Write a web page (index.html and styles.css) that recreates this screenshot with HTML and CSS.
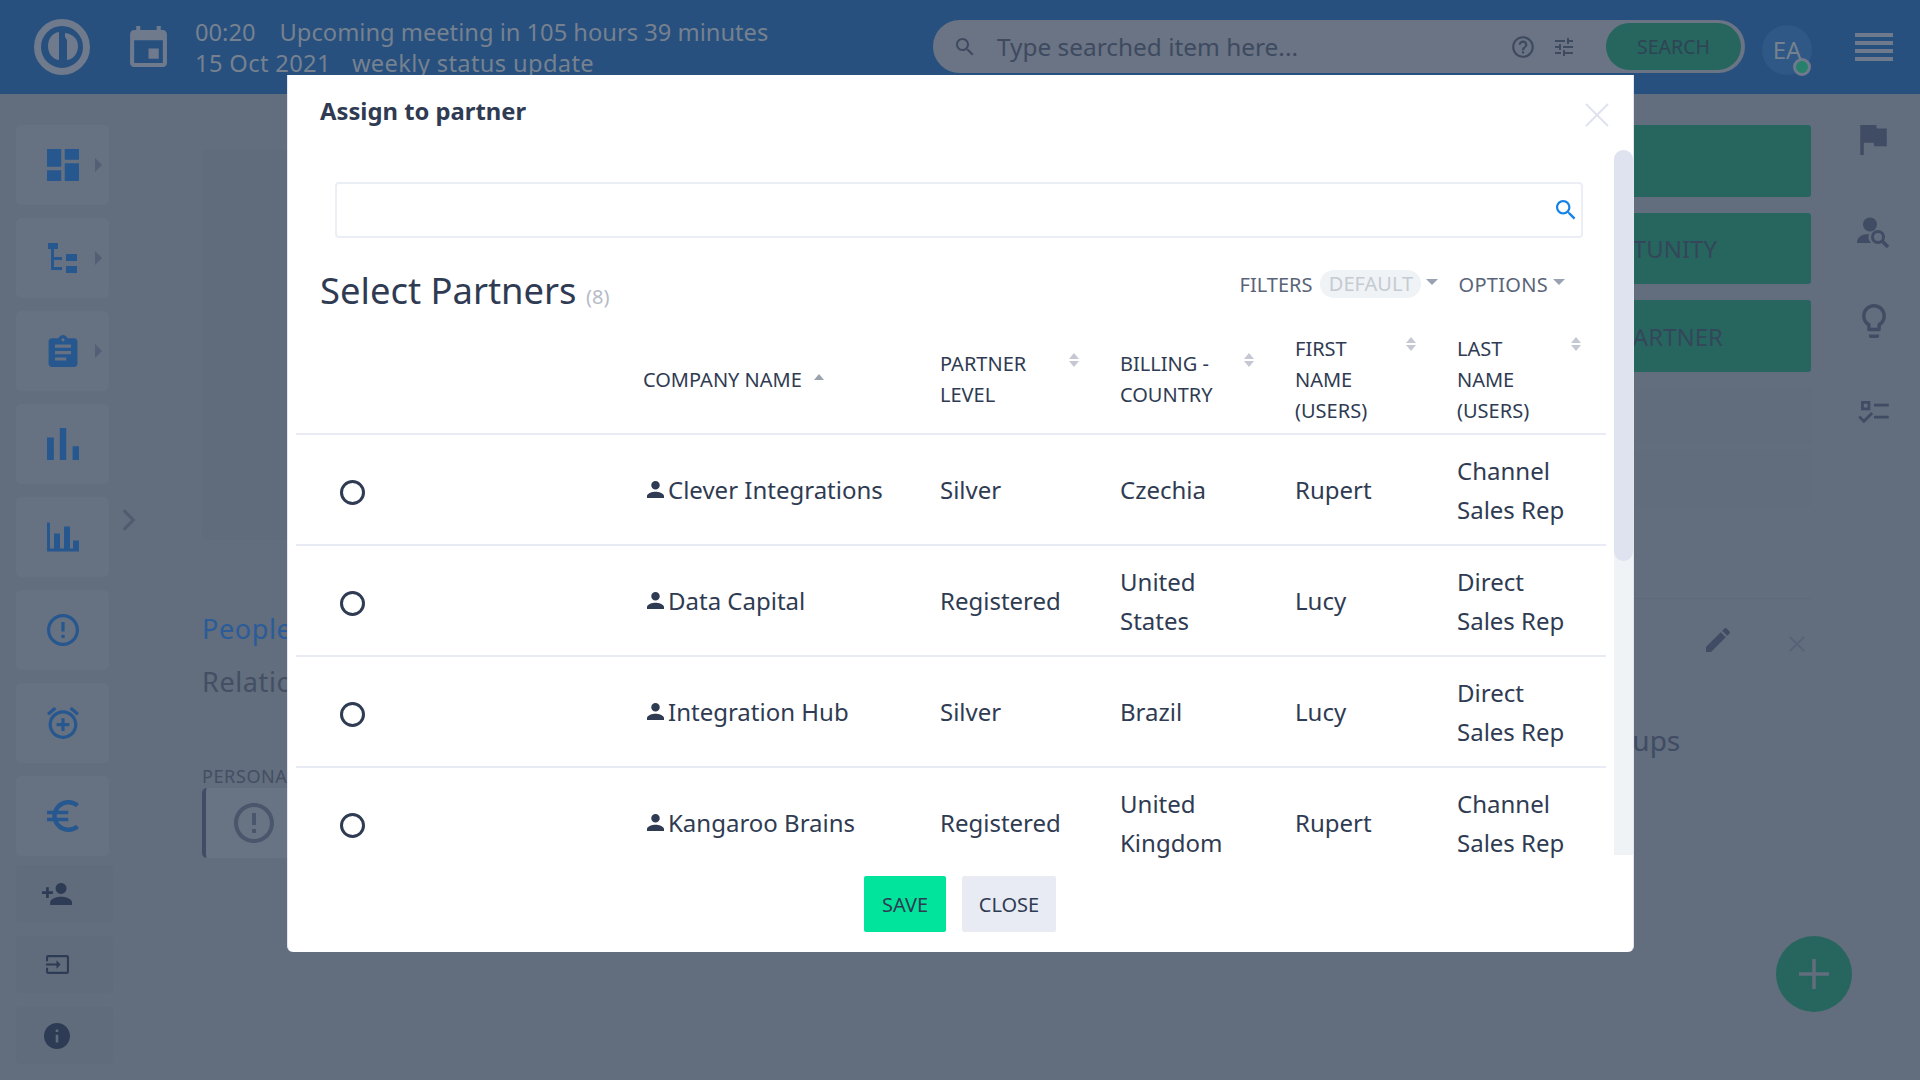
FILE: index.html
```html
<!DOCTYPE html>
<html lang="en">
<head>
<meta charset="utf-8">
<title>Assign to partner</title>
<link rel="stylesheet" href="styles.css">
</head>
<body>
<header class="topbar">
  <svg class="logo" viewBox="0 0 56 56"><circle cx="28" cy="28" r="24.5" fill="none" stroke="#6f7a8c" stroke-width="7"/><path d="M25 13v28c-7-1-11-7-11-14s4-13 11-14z" fill="#6f7a8c"/><path d="M31 14v4l2 3v20c7-1 11-7 11-14s-5-12-13-13z" fill="#6f7a8c"/></svg>
  <svg class="cal" viewBox="3 1 18 20"><path fill="#6f7a8c" d="M17 12h-5v5h5v-5zM16 1v2H8V1H6v2H5c-1.11 0-1.99.9-1.99 2L3 19c0 1.1.89 2 2 2h14c1.1 0 2-.9 2-2V5c0-1.1-.9-2-2-2h-1V1h-2zm3 18H5V8h14v11z"/></svg>
  <div class="meeting">
    <div><span>00:20</span><span class="gap-a">Upcoming meeting in 105 hours 39 minutes</span></div>
    <div class="meeting-sub"><span>15 Oct 2021</span><span class="gap-b">weekly status update</span></div>
  </div>
  <div class="searchbar">
    <svg class="i-search" viewBox="0 0 24 24"><path fill="#3e4a60" d="M15.5 14h-.79l-.28-.27C15.41 12.59 16 11.11 16 9.5 16 5.91 13.09 3 9.5 3S3 5.91 3 9.5 5.91 16 9.5 16c1.61 0 3.09-.59 4.23-1.57l.27.28v.79l5 4.99L20.49 19l-4.99-5zm-6 0C7.01 14 5 11.99 5 9.5S7.01 5 9.5 5 14 7.01 14 9.5 11.99 14 9.5 14z"/></svg>
    <span class="placeholder">Type searched item here...</span>
    <svg class="i-help" viewBox="0 0 24 24"><path fill="#3e4a60" d="M11 18h2v-2h-2v2zm1-16C6.48 2 2 6.48 2 12s4.48 10 10 10 10-4.48 10-10S17.52 2 12 2zm0 18c-4.41 0-8-3.59-8-8s3.59-8 8-8 8 3.59 8 8-3.59 8-8 8zm0-14c-2.21 0-4 1.79-4 4h2c0-1.1.9-2 2-2s2 .9 2 2c0 2-3 1.75-3 5h2c0-2.25 3-2.5 3-5 0-2.21-1.79-4-4-4z"/></svg>
    <svg class="i-tune" viewBox="0 0 24 24"><path fill="#3e4a60" d="M3 17v2h6v-2H3zM3 5v2h10V5H3zm10 16v-2h8v-2h-8v-2h-2v6h2zM7 9v2H3v2h4v2h2V9H7zm14 4v-2H11v2h10zm-6-4h2V7h4V5h-4V3h-2v6z"/></svg>
    <span class="search-btn">SEARCH</span>
  </div>
  <div class="avatar">EA<span class="status"></span></div>
  <div class="burger"><i></i><i></i><i></i><i></i></div>
</header>

<div class="app">
  <nav class="side">
    <div class="tile"><svg viewBox="3 3 18 18"><path d="M3 13h8V3H3v10zm0 8h8v-6H3v6zm10 0h8V11h-8v10zm0-18v6h8V3h-8z"/></svg><b class="tri"></b></div>
    <div class="tile"><svg viewBox="0 0 32 32"><path d="M1 1h10v6H1zM4 7h3v8h8v3H7v7h8v3H4zM19 12h11v7H19zM19 24h11v7H19z"/></svg><b class="tri"></b></div>
    <div class="tile"><svg viewBox="3 1 18 20"><path d="M19 3h-4.18C14.4 1.84 13.3 1 12 1c-1.3 0-2.4.84-2.82 2H5c-1.1 0-2 .9-2 2v14c0 1.1.9 2 2 2h14c1.1 0 2-.9 2-2V5c0-1.1-.9-2-2-2zm-7 0c.55 0 1 .45 1 1s-.45 1-1 1-1-.45-1-1 .45-1 1-1zm2 14H7v-2h7v2zm3-4H7v-2h10v2zm0-4H7V7h10v2z"/></svg><b class="tri"></b></div>
    <div class="tile"><svg viewBox="5 5 14 14"><path d="M5 9.2h3V19H5zM10.6 5h2.8v14h-2.8zm5.6 8H19v6h-2.8z"/></svg></div>
    <div class="tile"><svg viewBox="0 0 32 29"><path d="M0 0h3v26h4V11h6v15h4V4h6v22h3V18h6v11H0z"/></svg></div>
    <div class="tile"><svg viewBox="2 2 20 20"><path d="M11 15h2v2h-2zm0-8h2v6h-2zm.99-5C6.47 2 2 6.48 2 12s4.47 10 9.99 10C17.52 22 22 17.52 22 12S17.52 2 11.99 2zM12 20c-4.42 0-8-3.58-8-8s3.58-8 8-8 8 3.58 8 8-3.58 8-8 8z"/></svg></div>
    <div class="tile"><svg viewBox="2 2 20 20"><path d="M7.88 3.39L6.6 1.86 2 5.71l1.29 1.53 4.59-3.85zM22 5.72l-4.6-3.86-1.29 1.53 4.6 3.86L22 5.72zM12 4c-4.97 0-9 4.03-9 9s4.02 9 9 9c4.97 0 9-4.03 9-9s-4.03-9-9-9zm0 16c-3.87 0-7-3.13-7-7s3.13-7 7-7 7 3.13 7 7-3.13 7-7 7zm1-11h-2v3H8v2h3v3h2v-3h3v-2h-3V9z"/></svg></div>
    <div class="tile"><svg viewBox="3 3 18 18"><path d="M15 18.5c-2.51 0-4.68-1.42-5.76-3.5H15v-2H8.58c-.05-.33-.08-.66-.08-1s.03-.67.08-1H15V9H9.24C10.32 6.92 12.5 5.5 15 5.5c1.61 0 3.09.59 4.23 1.57L21 5.3C19.41 3.87 17.3 3 15 3c-3.92 0-7.24 2.51-8.48 6H3v2h3.06c-.04.33-.06.66-.06 1s.02.67.06 1H3v2h3.52c1.24 3.49 4.56 6 8.48 6 2.31 0 4.41-.87 6-2.3l-1.77-1.77c-1.14.98-2.61 1.57-4.23 1.57z"/></svg></div>
    <div class="tile small first-small"><svg viewBox="1 4 22 16"><path d="M15 12c2.21 0 4-1.79 4-4s-1.79-4-4-4-4 1.79-4 4 1.79 4 4 4zm-9-2V7H4v3H1v2h3v3h2v-3h3v-2H6zm9 4c-2.67 0-8 1.34-8 4v2h16v-2c0-2.66-5.33-4-8-4z"/></svg></div>
    <div class="tile small"><svg class="login" viewBox="1 3 22 18"><path d="M21 3.01H3c-1.1 0-2 .9-2 2V9h2V4.99h18v14.03H3V15H1v4.01c0 1.1.9 1.98 2 1.98h18c1.1 0 2-.88 2-1.98v-14c0-1.11-.9-2-2-2zM11 16l4-4-4-4v3H1v2h10v3z"/></svg></div>
    <div class="tile small"><svg class="about" viewBox="2 2 20 20"><path d="M12 2C6.48 2 2 6.48 2 12s4.48 10 10 10 10-4.48 10-10S17.52 2 12 2zm1 15h-2v-6h2v6zm0-8h-2V7h2v2z"/></svg></div>
  </nav>
  <div class="collapse"><svg viewBox="0 0 16 26"><path d="M2 2l11 11L2 24" fill="none" stroke="#505c72" stroke-width="3.5"/></svg></div>
  <main class="content">
    <div class="ghost-panel"></div>
    <div class="tab-blue">People</div>
    <div class="tab-grey">Relationships</div>
    <div class="caption">PERSONAL</div>
    <div class="notice"><svg viewBox="2 2 20 20"><path fill="#4a566c" d="M11 15h2v2h-2zm0-8h2v6h-2zm.99-5C6.47 2 2 6.48 2 12s4.47 10 9.99 10C17.52 22 22 17.52 22 12S17.52 2 11.99 2zM12 20c-4.42 0-8-3.58-8-8s3.58-8 8-8 8 3.58 8 8-3.58 8-8 8z"/></svg></div>
  </main>
  <aside class="actions">
    <div class="action"></div>
    <div class="action action-mid">OPPORTUNITY</div>
    <div class="action action-last">ASSIGN TO PARTNER</div>
    <div class="ghost-row"></div>
    <div class="ghost-row"></div>
    <div class="rule"></div>
    <div class="tools">
      <svg class="pencil" viewBox="3 3 18 18"><path fill="#3f4c63" d="M3 17.25V21h3.75L17.81 9.94l-3.75-3.75L3 17.25zM20.71 7.04c.39-.39.39-1.02 0-1.41l-2.34-2.34c-.39-.39-1.02-.39-1.41 0l-1.83 1.83 3.75 3.75 1.83-1.83z"/></svg>
      <svg class="cross" viewBox="0 0 20 20"><path d="M2 2l16 16M18 2L2 18" stroke="#566278" stroke-width="2" fill="none"/></svg>
    </div>
    <div class="groups">Groups</div>
  </aside>
  <aside class="rail">
    <svg class="flag" viewBox="5 4 15 17"><path d="M14.4 6L14 4H5v17h2v-7h5.6l.4 2h7V6z"/></svg>
    <svg class="finder" viewBox="0 0 34 32"><circle cx="13" cy="7.5" r="7"/><path d="M0 26c0-6 5-9 12-9-1 3-1 6 2 9z"/><circle cx="21" cy="20" r="5.5" fill="none" stroke="#3f4c63" stroke-width="3"/><path d="M25 24l6 6" stroke="#3f4c63" stroke-width="3.5" fill="none"/></svg>
    <svg class="bulb" viewBox="5 2 14 20"><path d="M9 21c0 .55.45 1 1 1h4c.55 0 1-.45 1-1v-1H9v1zm3-19C8.14 2 5 5.14 5 9c0 2.38 1.19 4.47 3 5.74V17c0 .55.45 1 1 1h6c.55 0 1-.45 1-1v-2.26c1.81-1.27 3-3.36 3-5.74 0-3.86-3.14-7-7-7zm2.85 11.1l-.85.6V16h-4v-2.3l-.85-.6C7.8 12.16 7 10.63 7 9c0-2.76 2.24-5 5-5s5 2.24 5 5c0 1.63-.8 3.16-2.15 4.1z"/></svg>
    <svg class="tasks" viewBox="0 0 34 26"><path d="M3 1h10v10H3zM6 4v4h4V4zM17 4h16v3H17zM17 17h16v3H17z"/><path d="M1 18l5 5 9-9" fill="none" stroke="#3f4c63" stroke-width="3"/></svg>
  </aside>
</div>

<div class="fab"><svg viewBox="0 0 30 30"><path d="M15 0v30M0 15h30" stroke="#626d7d" stroke-width="3.5"/></svg></div>

<section class="modal">
  <div class="modal-head">
    <h2>Assign to partner</h2>
    <svg class="modal-x" viewBox="0 0 24 24"><path d="M1 1l22 22M23 1L1 23" stroke="#e0e3ef" stroke-width="2" fill="none"/></svg>
  </div>
  <div class="modal-body">
    <div class="scroller">
      <div class="finder-input"><svg viewBox="3 3 18 18"><path fill="#1583e6" d="M15.5 14h-.79l-.28-.27C15.41 12.59 16 11.11 16 9.5 16 5.91 13.09 3 9.5 3S3 5.91 3 9.5 5.91 16 9.5 16c1.61 0 3.09-.59 4.23-1.57l.27.28v.79l5 4.99L20.49 19l-4.99-5zm-6 0C7.01 14 5 11.99 5 9.5S7.01 5 9.5 5 14 7.01 14 9.5 11.99 14 9.5 14z"/></svg></div>
      <div class="list-title">
        <h1>Select Partners <small>(8)</small></h1>
        <div class="list-tools">
          <span class="t-label">FILTERS</span>
          <span class="pill">DEFAULT</span>
          <b class="caret"></b>
          <span class="t-label opt">OPTIONS</span>
          <b class="caret"></b>
        </div>
      </div>
      <table class="grid">
        <colgroup><col class="c0"><col class="c1"><col class="c2"><col class="c3"><col class="c4"><col class="c5"></colgroup>
        <thead>
          <tr>
            <th></th>
            <th>COMPANY NAME<span class="sort sort-co"><b class="up dark"></b></span></th>
            <th class="two">PARTNER<br>LEVEL<span class="sort sort-pl"><b class="up"></b><b class="dn"></b></span></th>
            <th class="two">BILLING -<br>COUNTRY<span class="sort sort-bc"><b class="up"></b><b class="dn"></b></span></th>
            <th>FIRST<br>NAME<br>(USERS)<span class="sort sort-fn"><b class="up"></b><b class="dn"></b></span></th>
            <th>LAST<br>NAME<br>(USERS)<span class="sort sort-ln"><b class="up"></b><b class="dn"></b></span></th>
          </tr>
        </thead>
        <tbody>
          <tr>
            <td><span class="radio"></span></td>
            <td><span class="co"><svg viewBox="4 4 16 16"><path d="M12 12c2.21 0 4-1.79 4-4s-1.79-4-4-4-4 1.79-4 4 1.79 4 4 4zm0 2c-2.67 0-8 1.34-8 4v2h16v-2c0-2.66-5.33-4-8-4z"/></svg>Clever Integrations</span></td>
            <td>Silver</td><td>Czechia</td><td>Rupert</td><td>Channel<br>Sales Rep</td>
          </tr>
          <tr>
            <td><span class="radio"></span></td>
            <td><span class="co"><svg viewBox="4 4 16 16"><path d="M12 12c2.21 0 4-1.79 4-4s-1.79-4-4-4-4 1.79-4 4 1.79 4 4 4zm0 2c-2.67 0-8 1.34-8 4v2h16v-2c0-2.66-5.33-4-8-4z"/></svg>Data Capital</span></td>
            <td>Registered</td><td>United<br>States</td><td>Lucy</td><td>Direct<br>Sales Rep</td>
          </tr>
          <tr>
            <td><span class="radio"></span></td>
            <td><span class="co"><svg viewBox="4 4 16 16"><path d="M12 12c2.21 0 4-1.79 4-4s-1.79-4-4-4-4 1.79-4 4 1.79 4 4 4zm0 2c-2.67 0-8 1.34-8 4v2h16v-2c0-2.66-5.33-4-8-4z"/></svg>Integration Hub</span></td>
            <td>Silver</td><td>Brazil</td><td>Lucy</td><td>Direct<br>Sales Rep</td>
          </tr>
          <tr>
            <td><span class="radio"></span></td>
            <td><span class="co"><svg viewBox="4 4 16 16"><path d="M12 12c2.21 0 4-1.79 4-4s-1.79-4-4-4-4 1.79-4 4 1.79 4 4 4zm0 2c-2.67 0-8 1.34-8 4v2h16v-2c0-2.66-5.33-4-8-4z"/></svg>Kangaroo Brains</span></td>
            <td>Registered</td><td>United<br>Kingdom</td><td>Rupert</td><td>Channel<br>Sales Rep</td>
          </tr>
        </tbody>
      </table>
    </div>
    <div class="track"><div class="thumb"></div></div>
  </div>
  <div class="modal-foot">
    <button class="btn btn-save">SAVE</button>
    <button class="btn btn-close">CLOSE</button>
  </div>
</section>
</body>
</html>
```

FILE: styles.css
```css
* { box-sizing: border-box; }
html, body { margin: 0; height: 100%; }
body {
  position: relative;
  width: 1920px;
  height: 1080px;
  overflow: hidden;
  background: #626d7d;
  font-family: "Noto Sans", "Open Sans", sans-serif;
  color: #2f3b52;
}

/* top bar */
.topbar {
  height: 94px;
  background: #27507f;
  display: flex;
  align-items: flex-start;
}
.logo { width: 56px; height: 56px; margin: 19px 0 0 34px; flex: none; }
.cal { width: 37px; height: 41px; margin: 26px 0 0 40px; flex: none; }
.meeting {
  width: 738px;
  margin: 17px 0 0 28px;
  font-size: 23.7px;
  line-height: 30.5px;
  color: #76818f;
  white-space: nowrap;
  flex: none;
}
.meeting-sub { letter-spacing: .35px; }
.gap-a { margin-left: 24px; }
.gap-b { margin-left: 21px; }
.searchbar {
  width: 812px;
  height: 53px;
  margin-top: 20px;
  border-radius: 27px;
  background: #6a7484;
  display: flex;
  align-items: center;
  flex: none;
}
.i-search { width: 24px; height: 24px; margin-left: 20px; flex: none; }
.placeholder { margin-left: 20px; width: 513px; font-size: 24.4px; color: #3e4a60; flex: none; white-space: nowrap; }
.i-help { width: 26px; height: 26px; flex: none; }
.i-tune { width: 24px; height: 24px; flex: none; margin-left: 16px; }
.search-btn {
  width: 135px;
  height: 47px;
  margin-left: 30px;
  border-radius: 24px;
  background: #26665f;
  color: #2e4455;
  font-size: 19.5px;
  display: flex;
  align-items: center;
  justify-content: center;
  flex: none;
}
.avatar {
  position: relative;
  width: 50px;
  height: 50px;
  margin: 25px 0 0 17px;
  border-radius: 50%;
  background: #2f5886;
  color: #76818f;
  font-size: 24px;
  line-height: 50px;
  text-align: center;
  flex: none;
}
.status {
  position: absolute;
  right: 1px;
  bottom: -1px;
  width: 18px;
  height: 18px;
  border-radius: 50%;
  background: #26806c;
  border: 3px solid #6f7a8c;
}
.burger { margin: 33px 0 0 43px; width: 38px; display: flex; flex-direction: column; gap: 4px; flex: none; }
.burger i { display: block; height: 4px; background: #6f7a8c; }

/* page behind */
.app { display: flex; height: 986px; }
.side { width: 132px; padding: 31px 0 0 16px; display: flex; flex-direction: column; gap: 13px; flex: none; }
.tile {
  position: relative;
  width: 93px;
  height: 80px;
  background: #667182;
  border-radius: 5px;
  display: flex;
  align-items: center;
  justify-content: center;
  flex: none;
}
.tile svg { width: 32px; height: 32px; fill: #27578f; }
.tri {
  position: absolute;
  left: 79px;
  top: 33px;
  border-left: 7px solid #535f74;
  border-top: 7px solid transparent;
  border-bottom: 7px solid transparent;
}
.small { height: 57px; width: 97px; margin-top: 1px; background: #606b7b; justify-content: flex-start; padding-left: 26px; }
.first-small { margin-top: -4px; }
.small svg { width: 30px; height: 24px; fill: #2e3b54; }
.small svg.login { width: 23px; height: 23px; margin-left: 4px; }
.small svg.about { width: 26px; height: 26px; margin-left: 2px; }
.collapse { width: 70px; flex: none; }
.collapse svg { display: block; width: 14px; height: 24px; margin-top: 414px; margin-left: -10px; }
.content { width: 1198px; padding-top: 56px; flex: none; }
.ghost-panel { width: 700px; height: 390px; background: #606b7b; border-radius: 5px; }
.tab-blue { margin-top: 69px; font-size: 27px; letter-spacing: .6px; line-height: 40px; color: #2a5c9a; }
.tab-grey { margin-top: 13px; font-size: 27px; letter-spacing: .6px; line-height: 40px; color: #434f63; }
.caption { margin-top: 62px; font-size: 18px; letter-spacing: .6px; line-height: 24px; color: #434f63; }
.notice {
  width: 500px;
  height: 70px;
  border-left: 4px solid #3f4c63;
  border-radius: 5px;
  background: #687384;
  display: flex;
  align-items: center;
  padding-left: 28px;
}
.notice svg { width: 40px; height: 40px; }
.actions { width: 411px; padding-top: 31px; flex: none; }
.action {
  height: 72px;
  margin-bottom: 16px;
  background: #26665f;
  border-radius: 3px;
  display: flex;
  align-items: center;
  justify-content: flex-end;
  padding-right: 94px;
  font-size: 24px;
  color: #34465a;
}
.action-mid { height: 71px; }
.action-last { padding-right: 88px; }
.ghost-row { height: 56px; margin-bottom: 6px; background: #616c7c; border-radius: 3px; }
.rule { height: 1px; margin-top: 92px; background: #5d6879; }
.tools { height: 81px; display: flex; align-items: center; justify-content: flex-end; }
.pencil { width: 24px; height: 24px; margin: 0 58px 0 0; }
.cross { width: 18px; height: 18px; margin: 8px 5px 0 0; }
.groups { margin-top: 42px; padding-left: 184px; font-size: 28px; line-height: 36px; color: #3f4c63; white-space: nowrap; }
.rail { width: 109px; padding: 31px 0 0 16px; display: flex; flex-direction: column; align-items: center; flex: none; }
.rail svg { fill: #3f4c63; flex: none; }
.flag { width: 27px; height: 30px; }
.finder { width: 34px; height: 32px; margin-top: 62px; }
.bulb { width: 24px; height: 34px; margin-top: 55px; }
.tasks { width: 34px; height: 24px; margin-top: 62px; }
.fab {
  position: absolute;
  left: 1776px;
  top: 936px;
  width: 76px;
  height: 76px;
  border-radius: 50%;
  background: #26665f;
  display: flex;
  align-items: center;
  justify-content: center;
}
.fab svg { width: 30px; height: 30px; }

/* modal */
.modal {
  position: absolute;
  left: 287px;
  top: 75px;
  width: 1347px;
  height: 877px;
  background: #fff;
  border-left: 1px solid #e3e6f0;
  border-right: 1px solid #e3e6f0;
  border-radius: 0 0 6px 6px;
  display: flex;
  flex-direction: column;
}
.modal-head { height: 75px; position: relative; padding: 18px 0 0 32px; flex: none; }
.modal-head h2 { margin: 0; font-size: 23.8px; line-height: 36px; font-weight: 700; color: #2f3b52; }
.modal-x { position: absolute; right: 24px; top: 28px; width: 24px; height: 24px; }
.modal-body { height: 708px; display: flex; flex: none; align-items: flex-start; }
.scroller { width: 1326px; height: 708px; padding-left: 8px; overflow: hidden; flex: none; }
.track { width: 19px; height: 705px; background: #eff3f6; border-radius: 10px 10px 0 0; flex: none; }
.thumb { height: 411px; background: #dfe2ef; border-radius: 10px; }
.finder-input {
  width: 1248px;
  height: 56px;
  margin: 32px 0 0 39px;
  border: 2px solid #eceef5;
  border-radius: 4px;
  display: flex;
  align-items: center;
  justify-content: flex-end;
  padding-right: 5px;
}
.finder-input svg { width: 20px; height: 20px; }
.list-title { width: 1310px; height: 64px; margin-top: 18px; display: flex; align-items: flex-start; justify-content: space-between; }
.list-title h1 { margin: 0 0 0 24px; font-size: 36.4px; line-height: 68px; font-weight: 400; color: #2f3b52; white-space: nowrap; }
.list-title small { font-size: 20px; color: #b6bbc6; }
.list-tools { display: flex; align-items: center; height: 28px; margin: 14px 41px 0 0; font-size: 20px; color: #5a6478; }
.pill { margin-left: 8px; width: 101px; height: 28px; line-height: 28px; text-align: center; border-radius: 14px; background: #eff3f6; color: #c5cad3; }
.opt { margin-left: 20px; letter-spacing: .3px; }
.caret { margin-left: 5px; border-top: 6px solid #9aa1af; border-left: 6px solid transparent; border-right: 6px solid transparent; transform: translateY(-2px); }
.grid { width: 1310px; table-layout: fixed; border-collapse: collapse; }
.c0 { width: 344px; } .c1 { width: 297px; } .c2 { width: 180px; } .c3 { width: 175px; } .c4 { width: 162px; } .c5 { width: 152px; }
.grid th {
  position: relative;
  height: 114px;
  padding: 6px 0 0 3px;
  vertical-align: middle;
  text-align: left;
  font-size: 20px;
  line-height: 31px;
  font-weight: 400;
  color: #2f3b52;
  border-bottom: 2px solid #e8ebf3;
  white-space: nowrap;
}
.grid th.two { padding-top: 4px; }
.grid td {
  height: 111px;
  padding: 0 0 0 3px;
  vertical-align: middle;
  font-size: 24px;
  line-height: 39px;
  color: #2f3b52;
  border-bottom: 2px solid #e8ebf3;
  white-space: nowrap;
}
.sort { position: absolute; display: flex; flex-direction: column; gap: 2px; }
.sort b { display: block; border-left: 5px solid transparent; border-right: 5px solid transparent; }
.sort .up { border-bottom: 6px solid #c4c8d2; }
.sort .dn { border-top: 6px solid #c4c8d2; }
.sort .dark { border-bottom-color: #9aa1af; }
.sort-co { left: 174px; top: 54px; }
.sort-pl { left: 132px; top: 33px; }
.sort-bc { left: 127px; top: 33px; }
.sort-fn { left: 114px; top: 17px; }
.sort-ln { left: 117px; top: 17px; }
.radio { display: block; width: 25px; height: 25px; margin: 6px 0 0 41px; border: 3px solid #2f3b52; border-radius: 50%; }
.co { display: flex; align-items: center; }
.co svg { width: 17px; height: 17px; margin: 0 4px 0 4px; fill: #2f3b52; flex: none; }
.modal-foot { height: 94px; display: flex; justify-content: flex-start; padding: 18px 0 0 576px; gap: 16px; flex: none; }
.btn {
  height: 56px;
  border: 0;
  border-radius: 2px;
  font: inherit;
  font-size: 20px;
  color: #2f3b52;
}
.btn-save { width: 82px; background: #00e59b; }
.btn-close { width: 94px; background: #e8ebf3; }
```
